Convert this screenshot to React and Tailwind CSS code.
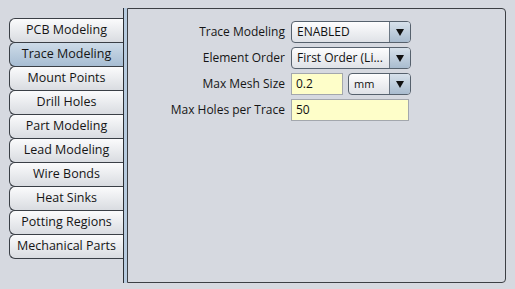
const tabs = [
  'PCB Modeling',
  'Trace Modeling',
  'Mount Points',
  'Drill Holes',
  'Part Modeling',
  'Lead Modeling',
  'Wire Bonds',
  'Heat Sinks',
  'Potting Regions',
  'Mechanical Parts',
];

const Arrow = () => (
  <div className="w-[21px] h-full border-l border-[#6b7784] bg-gradient-to-b from-[#d7e1eb] to-[#a9bccf] flex items-center justify-center">
    <svg width="8" height="7" viewBox="0 0 8 7">
      <path d="M0 0h8L4 7z" fill="#111" />
    </svg>
  </div>
);

const Select = ({ value, width, small }) => (
  <div
    className={`${width} h-[22px] rounded-[4px] border border-[#56616d] overflow-hidden flex bg-gradient-to-b from-[#fdfdfe] to-[#dfe2e7]`}
  >
    <div className={`flex-1 flex items-center pl-[5px] text-[#111] ${small ? 'text-[11px]' : 'text-[12px]'}`}>
      {value}
    </div>
    <Arrow />
  </div>
);

const Input = ({ value, width }) => (
  <div className={`${width} h-[22px] border border-[#a3a7ad] bg-[#fefec9] flex items-center pl-[4px] text-[12px] text-[#111]`}>
    {value}
  </div>
);

const App = () => {
  return (
    <div
      className="w-[515px] h-[289px] bg-[#d6d9e0] flex pt-[8px] overflow-hidden"
      style={{ fontFamily: '"Open Sans", "Noto Sans", sans-serif' }}
    >
      {/* Tabs */}
      <div className="w-[124px] h-[275px] border-r border-[#2b2f35] pt-[10px] pl-[9px] flex flex-col">
        {tabs.map((t, i) => (
          <div
            key={t}
            className={`h-[25px] ${i > 0 ? '-mt-px' : ''} border border-r-0 border-[#3a3f46] rounded-l-[6px] flex items-center justify-center text-[12.5px] text-[#151515] ${
              i === 1
                ? 'bg-gradient-to-b from-[#cddbe8] to-[#a7bdd3]'
                : 'bg-gradient-to-b from-[#fbfbfc] to-[#d9dce1]'
            }`}
          >
            {t}
          </div>
        ))}
      </div>
      <div className="w-[3px] h-[275px] bg-[#b7cbdf]" />

      {/* Panel */}
      <div className="w-[379px] h-[275px] border border-[#3c3f44] rounded-tr-[4px] rounded-br-[4px] pt-[12px]">
        <div className="grid grid-cols-[157px_auto] gap-x-[6px] gap-y-[4px] items-center text-[12px] text-[#151515]">
          <div className="text-right">Trace Modeling</div>
          <Select value="ENABLED" width="w-[120px]" />
          <div className="text-right">Element Order</div>
          <Select value="First Order (Li..." width="w-[120px]" />
          <div className="text-right">Max Mesh Size</div>
          <div className="flex gap-[5px]">
            <Input value="0.2" width="w-[52px]" />
            <Select value="mm" width="w-[63px]" small />
          </div>
          <div className="text-right">Max Holes per Trace</div>
          <Input value="50" width="w-[118px]" />
        </div>
      </div>
    </div>
  );
};

export default App;
